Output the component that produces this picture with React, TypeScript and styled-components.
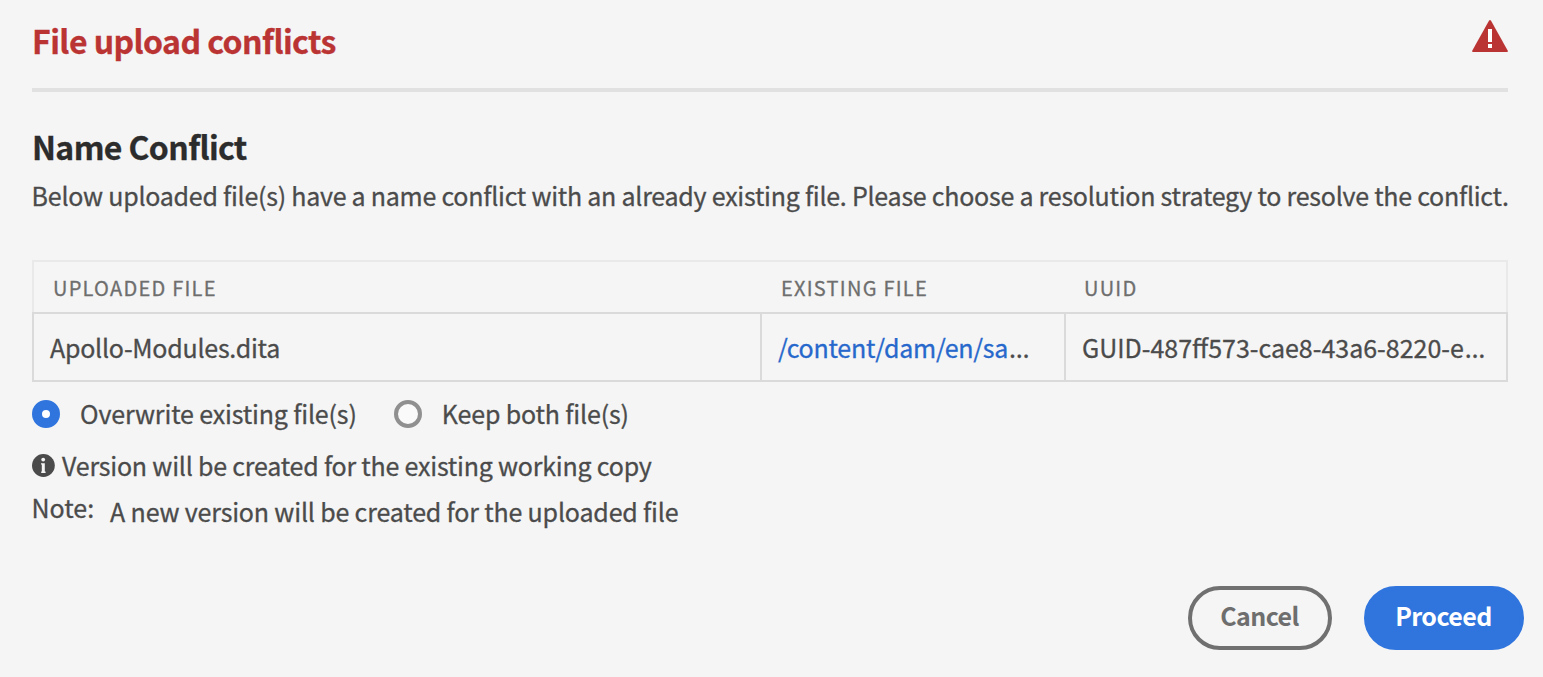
import React, { useState } from "react";
import styled, { createGlobalStyle } from "styled-components";

const Global = createGlobalStyle`
  * { box-sizing: border-box; }
  body {
    margin: 0;
    background: #f5f5f5;
    color: #4b4b4b;
    font-family: "Noto Sans CJK SC", "Noto Sans", sans-serif;
    font-size: 25px;
    -webkit-text-stroke: 0.3px currentColor;
  }
`;

const Dialog = styled.main`
  width: 1543px;
  height: 677px;
  padding: 0 19px 27px 32px;
  display: flex;
  flex-direction: column;
  white-space: nowrap;
  background: #f5f5f5;
`;

const Header = styled.header`
  display: flex;
  justify-content: space-between;
  align-items: flex-start;
  height: 92px;
  padding-top: 20px;
  margin-right: 16px;
  border-bottom: 4px solid #e1e1e1;
`;

const Title = styled.h1`
  margin: 0;
  font-size: 32px;
  line-height: 40px;
  font-weight: 700;
  letter-spacing: -0.55px;
  color: #bb3434;
`;

const Body = styled.section`
  flex: 1;
  margin-right: 16px;
  padding-top: 34px;
`;

const SectionTitle = styled.h2`
  margin: 0;
  font-size: 32px;
  line-height: 40px;
  font-weight: 700;
  letter-spacing: -0.62px;
  color: #2c2c2c;
`;

const Description = styled.p`
  margin: 11px 0 47px -0.4px;
  line-height: 36px;
  letter-spacing: -0.247px;
`;

const Table = styled.div`
  height: 122px;
`;

const HeadRow = styled.div`
  display: grid;
  grid-template-columns: 728px 303px 1fr;
  height: 52px;
  border: 2px solid #e9e9e9;
  border-bottom: 0;
`;

const HeadCell = styled.div`
  padding-left: 19px;
  font-size: 20px;
  line-height: 51px;
  letter-spacing: 1.25px;
  color: #6e6e6e;
`;

const DataRow = styled.div`
  display: grid;
  grid-template-columns: 726px 304px 1fr;
  height: 70px;
  border: 2px solid #dadada;
`;

const Cell = styled.div<{ $spacing: number }>`
  padding-left: 16px;
  line-height: 66px;
  letter-spacing: ${(p) => p.$spacing}px;

  & + & {
    border-left: 2px solid #dadada;
  }
`;

const Path = styled.a`
  color: #2768cc;
`;

const Ellipsis = styled.span`
  margin-left: 1px;
  font-family: "Noto Sans", sans-serif;
  font-size: 26px;
  line-height: 1;
`;

const RadioGroup = styled.div`
  display: flex;
  gap: 37px;
  margin-top: 14px;
  height: 36px;
`;

const RadioLabel = styled.label`
  display: flex;
  align-items: flex-start;
  gap: 20px;
  line-height: 35px;
  letter-spacing: -0.15px;
`;

const RadioInput = styled.input`
  appearance: none;
  flex: none;
  width: 28px;
  height: 28px;
  margin: 4px 0 0;
  border: 4px solid #909090;
  border-radius: 50%;
  background: #fafafa;

  &:checked {
    border: 10px solid #3075de;
    background: #fff;
  }
`;

const InfoLine = styled.div`
  display: flex;
  align-items: center;
  gap: 7px;
  height: 36px;
  margin-top: 15px;
  line-height: 36px;
  letter-spacing: -0.21px;
`;

const Note = styled.div`
  display: flex;
  gap: 16px;
  margin: 6px 0 0 -0.5px;
  line-height: 36px;
`;

const NoteText = styled.span`
  padding-top: 4px;
  letter-spacing: -0.17px;
`;

const Footer = styled.footer`
  display: flex;
  justify-content: flex-end;
  gap: 32px;
`;

const Button = styled.button<{ $primary?: boolean }>`
  width: ${(p) => (p.$primary ? 160 : 144)}px;
  height: 64px;
  padding: 0 1px 6px 0;
  border: 4px solid ${(p) => (p.$primary ? "#3075de" : "#707070")};
  border-radius: 32px;
  background: ${(p) => (p.$primary ? "#3075de" : "transparent")};
  color: ${(p) => (p.$primary ? "#fff" : "#6e6e6e")};
  font: inherit;
  font-weight: 700;
  line-height: 50px;
  letter-spacing: -0.55px;
  -webkit-text-stroke: 0;
`;

const AlertIcon = () => (
  <svg width="36" height="32" viewBox="0 0 36 32">
    <path d="M17.1 0.6Q18 -0.6 18.9 0.6L35.8 30.8Q36.2 32 35 32H1Q-0.2 32 0.2 30.8Z" fill="#bb3434" />
    <path d="M16 9h4v13h-4zM16 24h4v4h-4z" fill="#fff" />
  </svg>
);

const InfoIcon = () => (
  <svg width="23" height="23" viewBox="0 0 23 23">
    <circle cx="11.4" cy="11.5" r="11.4" fill="#4b4b4b" />
    <circle cx="11.2" cy="5.6" r="1.9" fill="#f5f5f5" />
    <path d="M9 9.2h3.8v8.4h0.8v1.4H9.2v-1.4h0.6v-7.2H9z" fill="#f5f5f5" />
  </svg>
);

export default function App() {
  const [choice, setChoice] = useState("overwrite");
  return (
    <Dialog>
      <Global />
      <Header>
        <Title>File upload conflicts</Title>
        <AlertIcon />
      </Header>
      <Body>
        <SectionTitle>Name Conflict</SectionTitle>
        <Description>
          Below uploaded file(s) have a name conflict with an already existing file. Please choose a resolution
          strategy to resolve the conflict.
        </Description>
        <Table>
          <HeadRow>
            <HeadCell>UPLOADED FILE</HeadCell>
            <HeadCell>EXISTING FILE</HeadCell>
            <HeadCell>UUID</HeadCell>
          </HeadRow>
          <DataRow>
            <Cell $spacing={-0.25}>Apollo-Modules.dita</Cell>
            <Cell $spacing={-0.25}>
              <Path>/content/dam/en/sa</Path>
              <Ellipsis>…</Ellipsis>
            </Cell>
            <Cell $spacing={0}>
              GUID-487ff573-cae8-43a6-8220-e<Ellipsis>…</Ellipsis>
            </Cell>
          </DataRow>
        </Table>
        <RadioGroup>
          <RadioLabel>
            <RadioInput
              type="radio"
              name="strategy"
              checked={choice === "overwrite"}
              onChange={() => setChoice("overwrite")}
            />
            Overwrite existing file(s)
          </RadioLabel>
          <RadioLabel>
            <RadioInput
              type="radio"
              name="strategy"
              checked={choice === "keep"}
              onChange={() => setChoice("keep")}
            />
            Keep both file(s)
          </RadioLabel>
        </RadioGroup>
        <InfoLine>
          <InfoIcon />
          Version will be created for the existing working copy
        </InfoLine>
        <Note>
          <span>Note:</span>
          <NoteText>A new version will be created for the uploaded file</NoteText>
        </Note>
      </Body>
      <Footer>
        <Button>Cancel</Button>
        <Button $primary>Proceed</Button>
      </Footer>
    </Dialog>
  );
}
